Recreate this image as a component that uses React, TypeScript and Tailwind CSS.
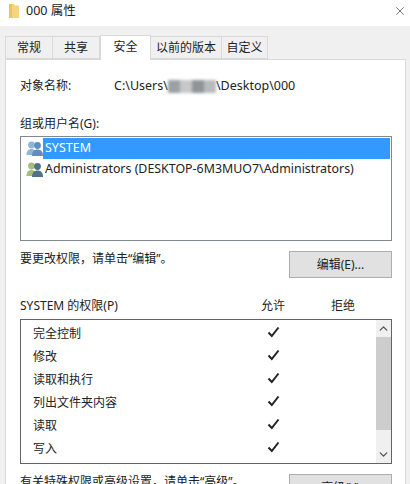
import { X, ChevronUp, ChevronDown } from 'lucide-react'

const font = { fontFamily: '"Noto Sans", "Noto Sans CJK SC", sans-serif' }

const tabs = [
  { label: '常规', width: 'w-[48px]' },
  { label: '共享', width: 'w-[47px]' },
  { label: '安全', width: 'w-[51px]', active: true },
  { label: '以前的版本', width: 'w-[71px]' },
  { label: '自定义', width: 'w-[46px]' },
]

const permissions = ['完全控制', '修改', '读取和执行', '列出文件夹内容', '读取', '写入']

function FolderIcon() {
  return (
    <svg width="14" height="16" viewBox="0 0 14 16" className="blur-[0.4px]">
      <path d="M2 1h5l1 1.5h4V15H2z" fill="#f5d67f" />
      <path d="M2 1h3v14H2z" fill="#ecc35c" />
    </svg>
  )
}

function UsersIcon({ front, back }: { front: string; back: string }) {
  return (
    <svg width="17" height="17" viewBox="0 0 17 17" className="shrink-0">
      <circle cx="5.500" cy="5" r="3.400" fill={back} />
      <path d="M0.500 15c0-4 2-6 5-6s5 2 5 6z" fill={back} />
      <circle cx="11.500" cy="5.500" r="3.400" fill={front} />
      <path d="M6 16c0-4.500 2.200-6.500 5.500-6.500S17 11.500 17 16z" fill={front} />
    </svg>
  )
}

function Check() {
  return (
    <svg width="13" height="12" viewBox="0 0 13 12" className="-mt-[3px]">
      <path d="M1.500 6.500 L4.800 10 L11.500 1.500" fill="none" stroke="#222" strokeWidth="2" />
    </svg>
  )
}

function WinButton({ children }: { children: React.ReactNode }) {
  return (
    <div className="w-[103px] h-[27px] shrink-0 flex items-center justify-center bg-[#e1e1e1] border border-[#adadad] text-[12px] text-[#222]">
      {children}
    </div>
  )
}

export default function App() {
  return (
    <div className="w-[410px] h-[484px] overflow-hidden bg-[#f0f0f0] flex flex-col text-[12px] text-[#222]" style={font}>
      {/* title bar */}
      <div className="h-[26px] shrink-0 bg-white flex items-center pl-[7px] pr-[2px] pb-[4px]">
        <FolderIcon />
        <span className="ml-[5px] text-[12.500px]">000 属性</span>
        <X size={14} strokeWidth={1} className="ml-auto mr-[1px] text-[#111]" />
      </div>

      {/* tabs */}
      <div className="flex items-end h-[33px] shrink-0 pl-[5px]">
        {tabs.map((t) =>
          t.active ? (
            <div key={t.label} className={`${t.width} h-[25px] -mb-px z-10 bg-white border border-b-0 border-[#d9d9d9] flex items-center justify-center pb-[2px]`}>
              {t.label}
            </div>
          ) : (
            <div key={t.label} className={`${t.width} h-[23px] bg-[#f0f0f0] border border-[#d9d9d9] border-l-0 first:border-l flex items-center justify-center`}>
              {t.label}
            </div>
          )
        )}
      </div>

      {/* panel */}
      <div className="ml-[5px] w-[401px] flex-1 bg-white border border-[#d9d9d9] pl-[14px] pr-[13px]">
        <div className="flex items-center h-[18px] mt-[17px]">
          <span className="w-[94px]">对象名称:</span>
          <span className="text-[12.500px]">C:\Users\</span>
          <span className="flex w-[48px] h-[13px] blur-[1.500px]">
            <span className="flex-1 bg-[#9aa0a4]" />
            <span className="flex-1 bg-[#c6c8ca]" />
            <span className="flex-1 bg-[#8f9497]" />
            <span className="flex-1 bg-[#b8babc]" />
          </span>
          <span className="text-[12.500px]">\Desktop\000</span>
        </div>

        <div className="h-[18px] mt-[20px] flex items-center">组或用户名(G):</div>

        <div className="mt-[3px] h-[105px] border border-[#828790] p-px">
          <div className="flex items-center h-[21px] pl-[4px]">
            <UsersIcon front="#5f8fc0" back="#8db6d8" />
            <span className="flex-1 h-full bg-[#3399ff] text-white text-[12.500px] flex items-center pl-[2px]">SYSTEM</span>
          </div>
          <div className="flex items-center h-[21px] pl-[4px]">
            <UsersIcon front="#4f7288" back="#a5bd7c" />
            <span className="ml-[2px] text-[12.400px] whitespace-nowrap">Administrators (DESKTOP-6M3MUO7\Administrators)</span>
          </div>
        </div>

        <div className="flex items-start justify-between mt-[10px]">
          <span className="-mt-px">要更改权限，请单击“编辑”。</span>
          <WinButton>编辑(E)...</WinButton>
        </div>

        <div className="flex items-center h-[18px] mt-[19px]">
          <span className="w-[217px]">SYSTEM 的权限(P)</span>
          <span className="w-[72px] text-center">允许</span>
          <span className="w-[68px] text-center">拒绝</span>
        </div>

        <div className="mt-[4px] h-[145px] border border-[#646464] flex">
          <div className="flex-1 pt-[2px]">
            {permissions.map((p) => (
              <div key={p} className="flex items-center h-[23px] pl-[12px]">
                <span className="w-[234px]">{p}</span>
                <Check />
              </div>
            ))}
          </div>
          <div className="w-[15px] bg-[#f0f0f0] flex flex-col items-center">
            <ChevronUp size={13} strokeWidth={2.500} className="h-[17px] text-[#555]" />
            <div className="w-full h-[93px] bg-[#cdcdcd]" />
            <ChevronDown size={13} strokeWidth={2.500} className="mt-auto h-[17px] text-[#555]" />
          </div>
        </div>

        <div className="flex items-start justify-between mt-[10px]">
          <span className="-mt-px">有关特殊权限或高级设置，请单击“高级”。</span>
          <WinButton>高级(V)</WinButton>
        </div>
      </div>
    </div>
  )
}
